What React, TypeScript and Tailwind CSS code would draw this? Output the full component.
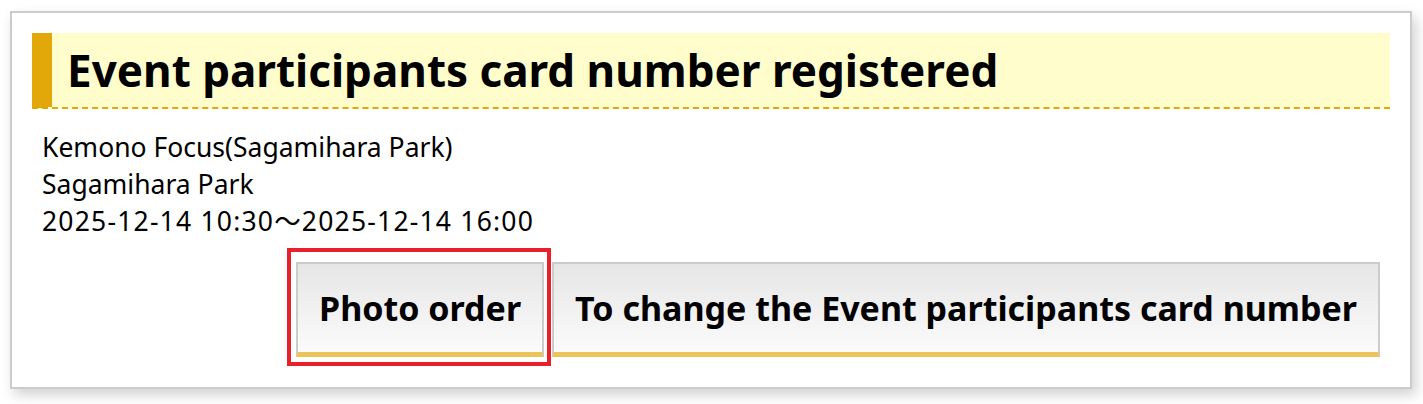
export default function App() {
  return (
    <div className="min-h-screen bg-white pl-[10px] pr-[11px] pt-[11px] font-['Noto_Sans',sans-serif] text-black">
      <div className="border-2 border-[#cccccc] bg-white px-5 pt-5 pb-[30px] shadow-[4px_6px_12px_rgba(0,0,0,0.18)]">
        <h1 className="flex h-[76px] items-center border-b-2 border-l-[20px] border-dashed border-b-[#e2a80a] border-l-[#e2a80a] bg-[#fffdcc] pl-[15px] text-[44px] font-bold leading-none [border-left-style:solid]">
          Event participants card number registered
        </h1>
        <div className="mt-5 pl-[10px] text-[26.5px] leading-[37px]">
          <p>Kemono Focus(Sagamihara Park)</p>
          <p>Sagamihara Park</p>
          <p className="h-[37px] tracking-[1.2px]">
            2025-12-14 10:30
            <span className="font-['Noto_Sans_CJK_JP',sans-serif] leading-none">～</span>
            2025-12-14 16:00
          </p>
        </div>
        <div className="mt-[22px] flex justify-end gap-2 pr-[10px]">
          <div className="relative">
            <button className="h-[95px] border-2 border-b-[5px] border-[#cccccc] border-b-[#ebc55a] bg-gradient-to-b from-[#e6e6e6] to-[#fbfbfb] px-[21px] text-[34px] font-bold">
              Photo order
            </button>
            <div className="pointer-events-none absolute -top-[14px] -right-[7px] -bottom-[9px] -left-[9px] border-4 border-[#e8202a]" />
          </div>
          <button className="h-[95px] border-2 border-b-[5px] border-[#cccccc] border-b-[#ebc55a] bg-gradient-to-b from-[#e6e6e6] to-[#fbfbfb] px-[21px] text-[34px] font-bold">
            To change the Event participants card number
          </button>
        </div>
      </div>
    </div>
  );
}
